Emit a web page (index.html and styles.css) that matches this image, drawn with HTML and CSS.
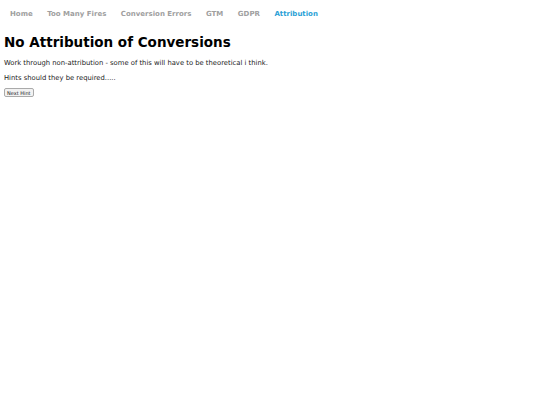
FILE: index.html
```html
<!DOCTYPE html>
<html>
<head>
<meta charset="utf-8">
<title>Attribution</title>
<link rel="stylesheet" href="styles.css">
</head>
<body>
<nav class="nav">
  <a class="nav-link" href="#">Home</a>
  <a class="nav-link" href="#">Too Many Fires</a>
  <a class="nav-link" href="#">Conversion Errors</a>
  <a class="nav-link" href="#">GTM</a>
  <a class="nav-link" href="#">GDPR</a>
  <a class="nav-link active" href="#">Attribution</a>
</nav>
<main class="content">
  <h1 class="title">No Attribution of Conversions</h1>
  <p class="text">Work through non-attribution - some of this will have to be theoretical i think.</p>
  <p class="text">Hints should they be required.....</p>
  <button class="hint-btn">Next Hint</button>
</main>
</body>
</html>
```

FILE: styles.css
```css
html, body {
  margin: 0;
  padding: 0;
  background: #fff;
}
body {
  font-family: "DejaVu Sans", Verdana, sans-serif;
  color: #000;
}
.nav {
  display: flex;
  gap: 14.5px;
  padding: 10px 10px 0;
}
.nav-link {
  font-size: 7px;
  font-weight: bold;
  color: #a0a0a0;
  text-decoration: none;
  line-height: 9px;
}
.nav-link.active {
  color: #2a9fd6;
}
.content {
  padding: 0 4px;
}
.title {
  font-size: 13.5px;
  font-weight: bold;
  margin: 14px 0 8px;
  line-height: 18px;
}
.text {
  font-size: 6.8px;
  margin: 0 0 6px;
  line-height: 9px;
  color: #222;
}
.text:last-of-type {
  margin-bottom: 5px;
}
.hint-btn {
  display: block;
  font-family: "DejaVu Sans", Verdana, sans-serif;
  font-size: 5px;
  line-height: 6px;
  padding: 0 2px;
  height: 9px;
  border: 1px solid #aaa;
  border-radius: 2px;
  background: #f2f2f2;
  color: #222;
}
```
